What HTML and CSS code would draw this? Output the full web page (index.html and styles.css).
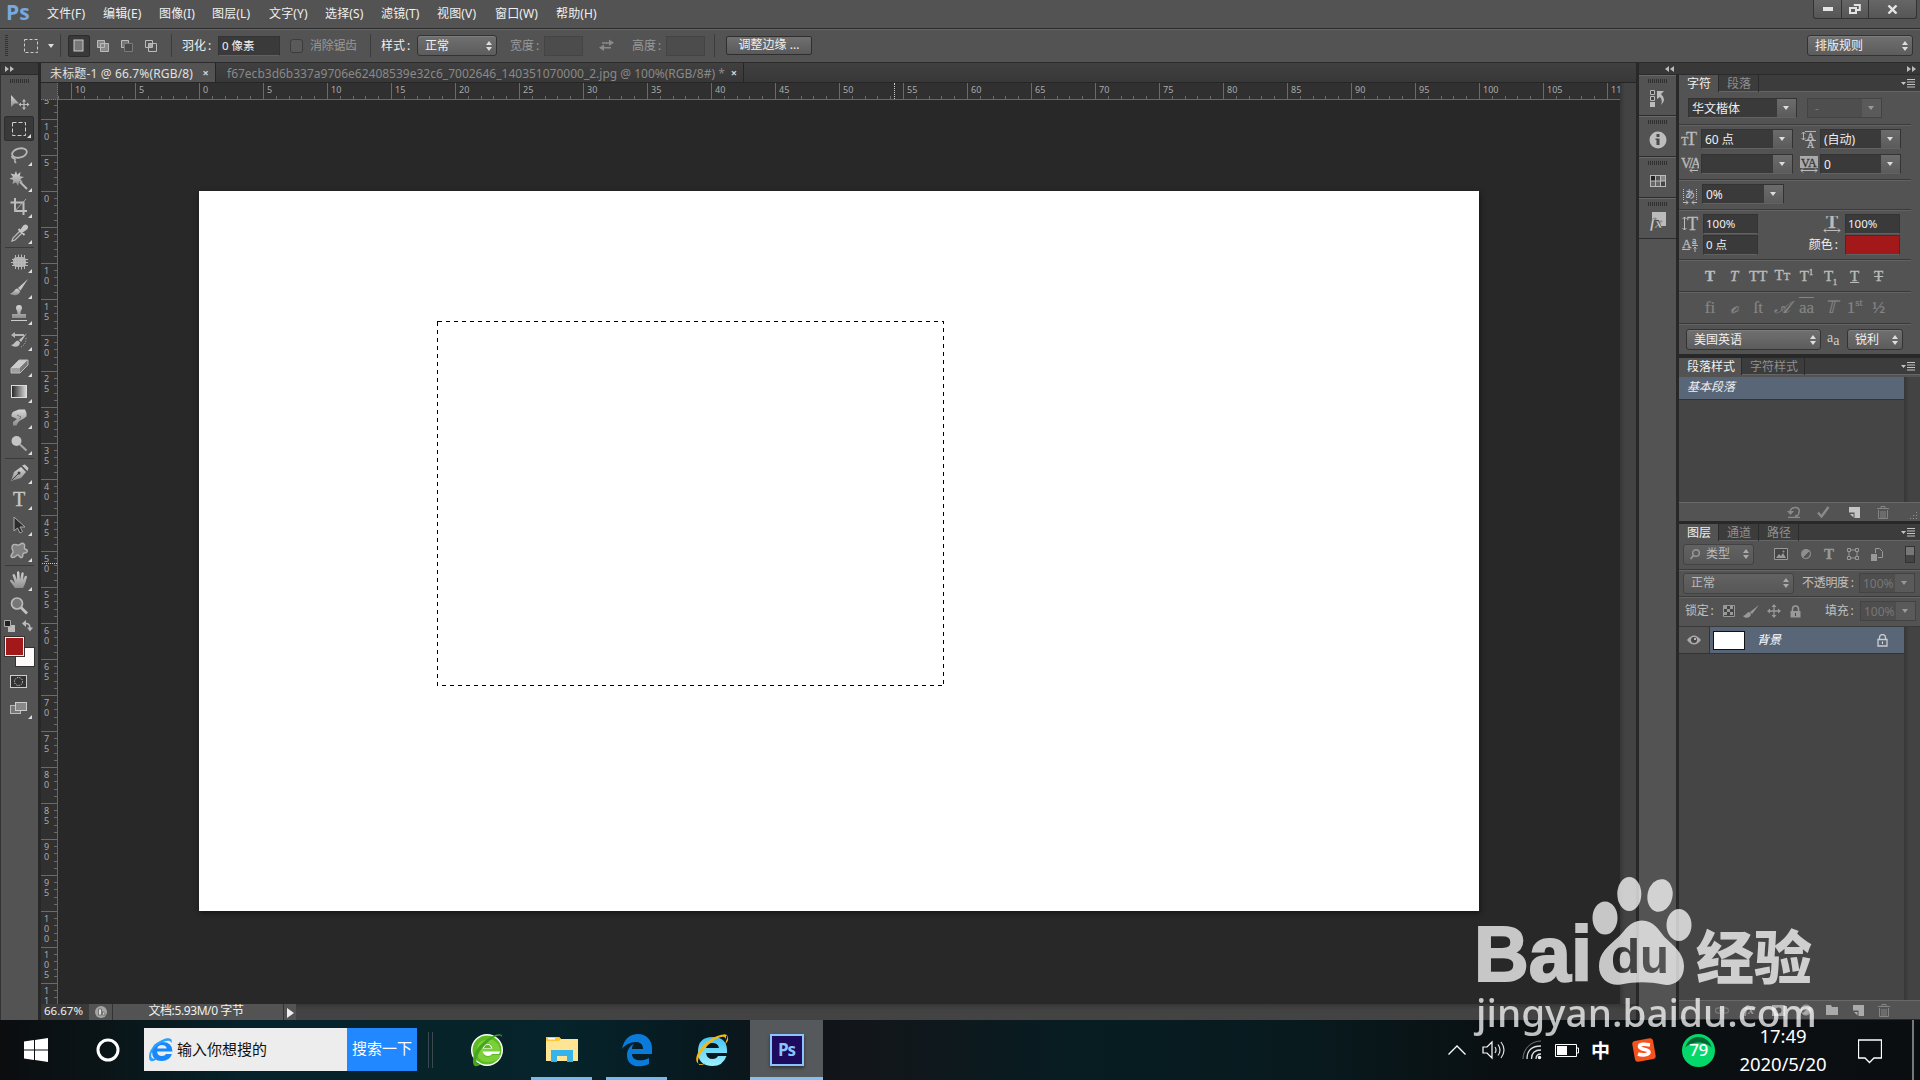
FILE: index.html
```html
<!DOCTYPE html>
<html lang="zh-CN">
<head>
<meta charset="utf-8">
<title>Photoshop</title>
<link rel="stylesheet" href="styles.css">
</head>
<body>
<svg class="defs" aria-hidden="true">
  <defs>
    <linearGradient id="metal" x1="0" y1="0" x2="0" y2="1"><stop offset="0" stop-color="#d6d6d6"/><stop offset="1" stop-color="#8e8e8e"/></linearGradient>
    <linearGradient id="ramp"><stop offset="0" stop-color="#222"/><stop offset="1" stop-color="#ddd"/></linearGradient>
    <linearGradient id="sky" x1="0" y1="0" x2="0" y2="1"><stop offset="0" stop-color="#45c3f5"/><stop offset="1" stop-color="#9df1ff"/></linearGradient>
    <symbol id="updown" viewBox="0 0 6 10"><path d="M3 0l3 4H0zM3 10l3-4H0z" fill="currentColor"/></symbol>
    <symbol id="menu" viewBox="0 0 14 9"><path d="M0 3h5L2.500 6zM6 0h8v1H6zM6 2.500h8v1H6zM6 5h8v1H6zM6 7.500h8v1H6z" fill="#c4c4c4"/></symbol>
    <symbol id="trash" viewBox="0 0 12 13"><path d="M0 2.500h12M4 2V.5h4V2M1.500 4v8.500h9V4M4 5v7M6 5v7M8 5v7" fill="none" stroke="currentColor"/></symbol>
    <symbol id="page" viewBox="0 0 11 11"><path d="M0 0h11v11H5.500V5.500H0z" fill="currentColor"/><path d="M1 7h3.500v3.500z" fill="currentColor"/></symbol>
    <symbol id="lock" viewBox="0 0 11 13"><path d="M2.500 6V4a3 3 0 0 1 6 0v2" fill="none" stroke="currentColor" stroke-width="1.600"/><path d="M.5 6h10v6.500H.5z" fill="currentColor"/><path d="M5 8h1v3H5z" fill="#444"/></symbol>
  </defs>
</svg>

<header class="menubar">
  <span class="logo">Ps</span>
  <nav class="menus">
    <span>文件(F)</span><span>编辑(E)</span><span>图像(I)</span><span>图层(L)</span><span>文字(Y)</span><span>选择(S)</span><span>滤镜(T)</span><span>视图(V)</span><span>窗口(W)</span><span>帮助(H)</span>
  </nav>
  <div class="winbtns">
    <span><svg width="12" height="4"><path d="M1 0h10v4H1z" fill="#e4e4e4"/></svg></span>
    <span><svg width="12" height="10"><path d="M4.800 1h6v5h-3M1 4h6v5H1z" fill="none" stroke="#e4e4e4" stroke-width="2"/></svg></span>
    <span><svg width="12" height="9"><path d="M1.500 .5l8 8M9.500 .5l-8 8" stroke="#e4e4e4" stroke-width="2.400"/></svg></span>
  </div>
</header>

<section class="options">
  <i class="vgrip"></i>
  <svg class="o-marquee" width="14" height="14"><rect x=".5" y=".5" width="13" height="13" fill="none" stroke="#ccc" stroke-dasharray="3 2"/></svg>
  <i class="tri"></i>
  <i class="vsep s1"></i>
  <span class="mode on"><svg width="12" height="13"><rect x="1" y="1" width="9" height="11" fill="#777" stroke="#ccc"/></svg></span>
  <span class="mode"><svg width="14" height="14"><path d="M1.500 1.500h7v7h-7zM4.500 4.500h8v8h-8z" fill="#888" stroke="#bbb"/></svg></span>
  <span class="mode"><svg width="14" height="14"><path d="M4.500 8.500h-3v-7h7v3" fill="#777" stroke="#bbb"/><path d="M4.500 4.500h8v8h-8z" fill="#4a4a4a" stroke="#7a7a7a"/></svg></span>
  <span class="mode"><svg width="14" height="14"><path d="M1.500 1.500h7v7h-7zM4.500 4.500h8v8h-8z" fill="none" stroke="#bbb"/><path d="M5 5h3v3H5z" fill="#aaa"/></svg></span>
  <i class="vsep s2"></i>
  <span class="lbl l1">羽化<b>:</b></span>
  <span class="field f1">0 像素</span>
  <i class="check"></i>
  <span class="lbl dim l2">消除锯齿</span>
  <i class="vsep s3"></i>
  <span class="lbl l3">样式<b>:</b></span>
  <span class="select style">正常<svg width="6" height="10"><use href="#updown"/></svg></span>
  <span class="lbl dim l4">宽度<b>:</b></span>
  <span class="field off"></span>
  <svg class="swap" width="15" height="13"><path d="M3 3.200h7V.5l5 3.300L10 7V4.800H3zM12 9.500H5V12L0 8.800 5 5.500v2.600h7z" fill="#8a8a8a"/></svg>
  <span class="lbl dim l5">高度<b>:</b></span>
  <span class="field off"></span>
  <i class="vsep s4"></i>
  <span class="button">调整边缘 ...</span>
  <span class="select workspace">排版规则<svg width="6" height="10"><use href="#updown"/></svg></span>
</section>

<main class="work">
  <aside class="tools">
    <div class="dockhead"><svg width="9" height="6"><path d="M0 0l4 3-4 3zM5 0l4 3-4 3z" fill="#bbb"/></svg></div>
    <i class="grip"></i>
    <div class="tool nofly"><svg viewBox="0 0 24 24"><path d="M4 4v12l3.500-3.500H12z" fill="url(#metal)"/><path d="M17 9v9M12.500 13.500h9" stroke="#bbb" stroke-width="1.200"/><path d="M17 8l2 2.500h-4zM17 19l2-2.500h-4zM11.500 13.500l2.500-2v4zM22.500 13.500l-2.500-2v4z" fill="#bbb"/></svg></div>
    <div class="tool on"><svg viewBox="0 0 24 24"><rect x="5.500" y="5.500" width="13" height="13" fill="none" stroke="#d0d0d0" stroke-dasharray="4 2"/></svg></div>
    <div class="tool"><svg viewBox="0 0 24 24"><ellipse cx="12.500" cy="10" rx="7.500" ry="4.500" transform="rotate(-14 12.500 10)" fill="none" stroke="#b8b8b8" stroke-width="1.800"/><path d="M5 13c-1 3 4 2 3 4s0 2 1 3" fill="none" stroke="#b8b8b8" stroke-width="1.500"/></svg></div>
    <div class="tool"><svg viewBox="0 0 24 24"><path d="M9 2l1.200 3.800L13.500 3l-.6 4.200 4.100.8-3.700 2 2.700 3.300-4-.9L11 17l-2-3.700L5.500 15l.8-4-4-1.200L6 8 3.500 4.500l4 1z" fill="url(#metal)"/><path d="M13 13l7 7" stroke="#bbb" stroke-width="2"/></svg></div>
    <div class="tool"><svg viewBox="0 0 24 24"><path d="M8 3v13h12M3.500 7.500h13V20" fill="none" stroke="#bdbdbd" stroke-width="2"/><path d="M7 17L19 4" stroke="#aaa"/></svg></div>
    <div class="tool"><svg viewBox="0 0 24 24"><path d="M5 20l1-3 7-7 2 2-7 7z" fill="none" stroke="#bbb" stroke-width="1.300"/><path d="M11.500 8l6 6M13.500 10.500l2.500-4q2-3 3.600-1.500t-1.500 3.700l-4 2.400" stroke="#c5c5c5" stroke-width="2" fill="#c5c5c5"/></svg></div>
    <hr>
    <div class="tool"><svg viewBox="0 0 24 24"><rect x="6" y="7" width="13" height="10" rx="4" fill="#b0b0b0"/><path d="M8.500 5v14M11.500 4.500v15M14.500 4.500v15M17.500 5v14M5 9.500h16M4 12.500h17M5 15.500h16" stroke="#b8b8b8"/></svg></div>
    <div class="tool"><svg viewBox="0 0 24 24"><path d="M21 3L11 12l2.500 2.500z" fill="#c8c8c8"/><path d="M10.500 12.500c-3 0-3 4-7.500 5 3 3 10 2 10-2.500z" fill="url(#metal)"/></svg></div>
    <div class="tool"><svg viewBox="0 0 24 24"><path d="M12 3a3 3 0 0 1 3 3c0 2-1.500 2-1.500 6H19v4H5v-4h5.500c0-4-1.500-4-1.500-6a3 3 0 0 1 3-3z" fill="url(#metal)"/><path d="M4 18.500h16" stroke="#ccc"/></svg></div>
    <div class="tool"><svg viewBox="0 0 24 24"><path d="M20 5l-8 7 2 2zM11 12.500c-3 0-3 4-7 4.500 3 3 9 2 9-2.500z" fill="#c0c0c0"/><path d="M4 7l4-3v2h9v2H8v2z" fill="#b5b5b5"/><path d="M19 10c0 4-1 7-5 9" fill="none" stroke="#b5b5b5" stroke-dasharray="1 1.500"/></svg></div>
    <div class="tool"><svg viewBox="0 0 24 24"><path d="M4 14l8-8h9l-8 8z" fill="#ccc"/><path d="M4 14h9v5H4z" fill="#a0a0a0"/><path d="M13 14l8-8v5l-8 8z" fill="#787878"/><path d="M4 14l8-8h9v5l-8 8H4z" fill="none" stroke="#bbb"/></svg></div>
    <div class="tool"><svg viewBox="0 0 24 24"><rect x="4.500" y="5.500" width="15" height="12" fill="url(#ramp)" stroke="#ddd"/></svg></div>
    <div class="tool"><svg viewBox="0 0 24 24"><path d="M6 19.500v-3.500l4-3-5.500-2.500Q4 6 8 5l4-1.500h6q2 3 1.500 7L16 13l-3 1.500-2 2-1.500 3z" fill="url(#metal)"/><path d="M10 9l4 2-2 2.500" stroke="#777" fill="none"/></svg></div>
    <div class="tool"><svg viewBox="0 0 24 24"><circle cx="9.500" cy="9" r="5" fill="#c4c4c4"/><path d="M13 12.500l6.500 6" stroke="#aaa" stroke-width="2"/></svg></div>
    <hr>
    <div class="tool"><svg viewBox="0 0 24 24"><path d="M4 20l3-9 7-5 5 5-5 6z" fill="url(#metal)"/><path d="M15 4.500l5.500 5.500 1-3-3.500-3.500z" fill="#c5c5c5"/><path d="M5 19l6-6" stroke="#444"/><circle cx="12" cy="12" r="1.500" fill="#444"/></svg></div>
    <div class="tool"><svg viewBox="0 0 24 24"><text x="12" y="18.500" class="tglyph">T</text></svg></div>
    <div class="tool"><svg viewBox="0 0 24 24"><path d="M7 4v14l3.500-3 2.500 5 2.500-1.500L13 14h5z" fill="#2b2b2b" stroke="#aaa"/></svg></div>
    <div class="tool"><svg viewBox="0 0 24 24"><path d="M6 6c2-2 4 1 6 0s3-3 5-1-1 4 1 5 3 1 2 3-4 0-4 2-1 5-3 3-2-3-4-1-5 2-5 0 3-3 2-5-2-4 0-6z" fill="#808080" stroke="#b5b5b5" stroke-width="1.400"/></svg></div>
    <hr>
    <div class="tool"><svg viewBox="0 0 24 24"><path d="M8 20l-5-7q0-2 2-1l3 3L5.500 7q1-2 2.500 0l2 5V4q1.200-1.500 2.300 0L13 12l1.500-7q1.500-1.500 2.200.3L16 12l2-4q2-1 2 1l-2 7-2 4z" fill="url(#metal)"/></svg></div>
    <div class="tool nofly"><svg viewBox="0 0 24 24"><circle cx="10" cy="9.500" r="5.500" fill="#777" stroke="#bbb" stroke-width="1.700"/><path d="M14 13.500l6 6" stroke="#c2c2c2" stroke-width="2.800"/></svg></div>
    <div class="colortop"><svg width="30" height="14"><path d="M4 5h7v7H4z" fill="#bbb"/><path d="M.5.5h6v6h-6z" fill="#222" stroke="#aaa"/><path d="M20 3.500h2q4 0 4 5" fill="none" stroke="#bbb" stroke-width="1.500"/><path d="M18 3.500L22 0v7zM23 7.500h6l-3 4z" fill="#bbb"/></svg></div>
    <div class="swatches"><i class="bg"></i><i class="fg"></i></div>
    <div class="tool nofly mask"><svg viewBox="0 0 24 24"><rect x="3.500" y="5.500" width="16" height="12" fill="#333" stroke="#ccc"/><circle cx="11.500" cy="11.500" r="4" fill="none" stroke="#ddd" stroke-dasharray="1.200 1.200"/></svg></div>
    <div class="tool"><svg viewBox="0 0 24 24"><rect x="3.500" y="9.500" width="10" height="8" fill="#777" stroke="#bbb"/><rect x="8.500" y="6.500" width="11" height="8" fill="#888" stroke="#ccc"/></svg></div>
  </aside>

  <section class="doc">
    <div class="tabs">
      <div class="tab active"><span>未标题-1 @ 66.7%(RGB/8)</span><b>×</b></div>
      <div class="tab other"><span>f67ecb3d6b337a9706e62408539e32c6_7002646_140351070000_2.jpg @ 100%(RGB/8#) *</span><b>×</b></div>
    </div>
    <div class="body">
      <div class="corner"></div>
      <div class="hruler">
        <span>10</span><span>5</span><span>0</span><span>5</span><span>10</span><span>15</span><span>20</span><span>25</span><span>30</span><span>35</span><span>40</span><span>45</span><span>50</span><span>55</span><span>60</span><span>65</span><span>70</span><span>75</span><span>80</span><span>85</span><span>90</span><span>95</span><span>100</span><span>105</span><span>110</span>
        <i class="hmark"></i>
      </div>
      <div class="vscroll"></div>
      <div class="vruler">
        <div class="vticks">
        <span>1<br>5</span><span>1<br>0</span><span>5</span><span>0</span><span>5</span><span>1<br>0</span><span>1<br>5</span><span>2<br>0</span><span>2<br>5</span><span>3<br>0</span><span>3<br>5</span><span>4<br>0</span><span>4<br>5</span><span>5<br>0</span><span>5<br>5</span><span>6<br>0</span><span>6<br>5</span><span>7<br>0</span><span>7<br>5</span><span>8<br>0</span><span>8<br>5</span><span>9<br>0</span><span>9<br>5</span><span>1<br>0<br>0</span><span>1<br>0<br>5</span><span>1<br>1<br>0</span>
        </div>
        <i class="vmark"></i>
      </div>
      <div class="canvas">
        <div class="paper"><svg class="selection" width="508" height="366"><rect x=".5" y=".5" width="506" height="364" fill="none" stroke="#000" stroke-dasharray="4 4" shape-rendering="crispEdges"/></svg></div>
      </div>
    </div>
    <div class="status">
      <span class="zoom">66.67%</span>
      <span class="share"><svg width="12" height="12"><circle cx="6" cy="6" r="6" fill="#a5a5a5"/><path d="M3.500 3h3v6h-3zM7.500 5.500l2.500 2v1.500H7.500z" fill="#ddd" stroke="#555" stroke-width=".7"/></svg></span>
      <span class="size">文档:5.93M/0 字节</span>
      <span class="go"><svg width="7" height="10"><path d="M0 0l7 5-7 5z" fill="#eee"/></svg></span>
    </div>
  </section>

  <section class="dock">
    <div class="dockhead"><svg width="9" height="6"><path d="M4 0L0 3l4 3zM9 0L5 3l4 3z" fill="#bbb"/></svg><svg width="9" height="6"><path d="M0 0l4 3-4 3zM5 0l4 3-4 3z" fill="#bbb"/></svg></div>
    <div class="dockbody">
      <div class="strip">
        <div class="cell"><i class="grip"></i><svg width="16" height="18"><path d="M.5.500h4v4h-4zM.5 6.500h4v4h-4z" fill="#444" stroke="#bbb"/><path d="M0 12h5v5H0z" fill="#bbb"/><path d="M7 1l7 0-3 3q6 6 0 11 2-5-1-8l-3 2z" fill="#bbb"/></svg></div>
        <div class="cell"><i class="grip"></i><svg width="18" height="18"><circle cx="9" cy="9" r="8.500" fill="#bdbdbd"/><path d="M7.500 3h3v3h-3zM6.500 7.500h4V14h-3V9h-1z" fill="#4a4a4a"/></svg></div>
        <div class="cell"><i class="grip"></i><svg width="16" height="12"><path d="M0 0h16v12H0z" fill="#bbb"/><path d="M1 1h4v4.500H1z" fill="#222"/><path d="M6 1h4v4.500H6z" fill="#555"/><path d="M11 1h4v4.500h-4z" fill="#888"/><path d="M1 6.500h4V11H1zM6 6.500h4V11H6z" fill="#666"/><path d="M11 6.500h4V11h-4z" fill="#444"/></svg></div>
        <div class="cell"><i class="grip"></i><svg width="18" height="20"><path d="M3 0h14v14h-5l-2-6H3z" fill="#bbb"/><text x="1" y="16" class="fx">fx</text></svg></div>
      </div>
      <div class="panels">
        <article class="panel character">
          <div class="ptabs"><span class="act w39">字符</span><span class="w39">段落</span><svg width="14" height="9"><use href="#menu"/></svg></div>
          <div class="row fontrow"><span class="combo c109">华文楷体<i></i></span><span class="combo c75 off">-<i></i></span></div>
          <div class="grp two">
            <svg width="18" height="16"><text x="0" y="14" class="g s12">T</text><text x="5" y="14" class="g s17">T</text></svg><span class="combo">60 点<i></i></span>
            <svg width="18" height="17"><path d="M3.500 1v8M1.500 3l2-2 2 2M1.500 7l2 2 2-2M5 .5h11M5 9.500h11" stroke="#b4b4b4" fill="none"/><text x="7" y="8.500" class="g s10">A</text><text x="7" y="17" class="g s10">A</text></svg><span class="combo">(自动)<i></i></span>
            <svg width="18" height="17"><text x="0" y="12" class="g s14 tight">V/A</text><path d="M9 14.500h8M11 12.500l-2 2 2 2" stroke="#bbb" fill="none"/></svg><span class="combo"><i></i></span>
            <svg width="18" height="17"><path d="M0 0h18v12H0z" fill="#aaa"/><text x="1" y="10.500" class="g s12 dark">VA</text><path d="M1 14.500h16M3 12.500l-2 2 2 2M15 12.500l2 2-2 2" stroke="#bbb" fill="none"/></svg><span class="combo">0<i></i></span>
          </div>
          <div class="grp one"><svg width="16" height="16"><path d="M1.500 0v11M14.500 0v11" stroke="#bbb" stroke-dasharray="1 1"/><text x="3" y="9" class="cj">あ</text><path d="M1 13.500h5M4 11.500l2 2-2 2M15 13.500h-5M12 11.500l-2 2 2 2" stroke="#bbb" fill="none"/></svg><span class="combo">0%<i></i></span></div>
          <div class="grp scale">
            <svg width="18" height="16"><path d="M2.500 1v13M.5 3l2-2 2 2M.5 12l2 2 2-2" stroke="#bbb" fill="none"/><text x="5" y="14" class="g s17">T</text></svg><span class="field">100%</span>
            <svg width="18" height="17"><text x="3" y="12" class="g s17 bold">T</text><path d="M1 14.500h16M3 12.500l-2 2 2 2M15 12.500l2 2-2 2" stroke="#bbb" fill="none"/></svg><span class="field">100%</span>
            <svg width="18" height="16"><text x="0" y="11" class="g s13">A</text><text x="10" y="7" class="g s10">a</text><path d="M0 12.500h8M10 8.500h6M13 15v-5M11.500 11.500l1.500-1.500 1.500 1.500" stroke="#bbb" fill="none"/></svg><span class="field">0 点</span>
            <span class="color">颜色<b>:</b></span><span class="field red"></span>
          </div>
          <div class="grp glyphs"><b>T</b><i>T</i><span>TT</span><span>T<small>T</small></span><span>T<sup>1</sup></span><span>T<sub>1</sub></span><u>T</u><s>T</s></div>
          <div class="grp glyphs dimmed"><span>fi</span><i>ℴ</i><span>ſt</span><i>𝒜</i><span class="over">aa</span><i>𝕋</i><span>1<sup>st</sup></span><span>½</span></div>
          <div class="row lang"><span class="select">美国英语<svg width="6" height="10"><use href="#updown"/></svg></span><span class="aa">a<small>a</small></span><span class="select">锐利<svg width="6" height="10"><use href="#updown"/></svg></span></div>
        </article>
        <article class="panel pstyles">
          <div class="ptabs"><span class="act w62">段落样式</span><span class="w62">字符样式</span><svg width="14" height="9"><use href="#menu"/></svg></div>
          <div class="list"><div class="inner"><div class="item">基本段落</div></div></div>
          <div class="foot f-styles">
            <svg width="14" height="12"><path d="M3 5q2-4 6-3.500t3 5-4 3M1 11.500h12" fill="none" stroke="#8a8a8a" stroke-width="1.500"/><path d="M0 5h7L3.500 9z" fill="#8a8a8a"/></svg>
            <svg width="13" height="12"><path d="M1 6.500l3.500 4L11.500 1" fill="none" stroke="#8a8a8a" stroke-width="2.400"/></svg>
            <svg class="lite" width="11" height="11"><use href="#page"/></svg>
            <svg class="dk" width="12" height="13"><use href="#trash"/></svg>
            <i class="resize"></i>
          </div>
        </article>
        <article class="panel layers">
          <div class="ptabs"><span class="act w39">图层</span><span class="w39">通道</span><span class="w39">路径</span><svg width="14" height="9"><use href="#menu"/></svg></div>
          <div class="lrow filter">
            <span class="select soft"><svg class="mag" width="10" height="11"><circle cx="6" cy="4" r="3.300" fill="none" stroke="#999" stroke-width="1.400"/><path d="M3.500 6.500L.5 10" stroke="#999" stroke-width="1.600"/></svg>类型<svg width="6" height="10"><use href="#updown"/></svg></span>
            <svg width="14" height="12"><path d="M.5.500h13v11H.5z" fill="#444" stroke="#999"/><path d="M2 10l3-4 2 2 2-3 3 5z" fill="#999"/><circle cx="9.500" cy="3.500" r="1" fill="#999"/></svg>
            <svg width="12" height="12"><circle cx="6" cy="6" r="5" fill="#8f8f8f"/><path d="M2.500 9.500a5 5 0 0 0 7-7z" fill="#555" stroke="#8f8f8f"/></svg>
            <svg width="12" height="12"><text x="1" y="11" class="g s15 grey bold">T</text></svg>
            <svg width="12" height="12"><path d="M2 2h8v8H2z" fill="none" stroke="#999"/><path d="M.5.5h3v3h-3zM8.500.5h3v3h-3zM.5 8.500h3v3h-3zM8.500 8.500h3v3h-3z" fill="#555" stroke="#999"/></svg>
            <svg width="12" height="13"><path d="M4.500 5V.5h4l3 3v6H7" fill="none" stroke="#999"/><path d="M0 6h6v7H0z" fill="#999"/></svg>
            <i class="switch"></i>
          </div>
          <div class="lrow blend">
            <span class="select soft">正常<svg width="6" height="10"><use href="#updown"/></svg></span><span class="t">不透明度<b>:</b></span><span class="combo off">100%<i></i></span>
          </div>
          <div class="lrow locks">
            <span class="t lk">锁定<b>:</b></span>
            <svg width="12" height="12"><path d="M.5.5h11v11H.5z" fill="#444" stroke="#999"/><path d="M1 1h3v3H1zM7 1h3v3H7zM4 4h3v3H4zM1 7h3v3H1zM7 7h3v3H7z" fill="#999"/></svg>
            <svg width="16" height="13"><path d="M16 0L7 7l2 2zM6.500 7c-3 0-3 3-6.500 4 2 3 8 2 8-2z" fill="#999"/></svg>
            <svg width="14" height="14"><path d="M7 2v10M2 7h10" stroke="#999" stroke-width="1.300"/><path d="M7 0l2.500 3h-5zM7 14l2.500-3h-5zM0 7l3-2.500v5zM14 7l-3-2.500v5z" fill="#999"/></svg>
            <svg class="lockg" width="11" height="13"><use href="#lock"/></svg>
            <span class="t fill">填充<b>:</b></span><span class="combo off">100%<i></i></span>
          </div>
          <div class="list layerlist"><div class="inner"><div class="layer">
            <span class="eye"><svg width="14" height="10"><path d="M0 5q7-9 14 0-7 9-14 0z" fill="#aaa"/><circle cx="7" cy="5" r="3" fill="#444"/><circle cx="8" cy="4" r="1" fill="#ddd"/></svg></span>
            <i class="thumb"></i><em>背景</em><svg class="lockw" width="11" height="13"><path d="M2.500 5V3.500a3 3 0 0 1 6 0V5M1 5.500h9v6.500H1z" fill="none" stroke="#ccc" stroke-width="1.300"/><path d="M5 7.500h1V10H5z" fill="#ddd"/></svg>
          </div></div></div>
          <div class="foot f-layers">
            <svg width="14" height="9"><path d="M6 2H3a2.500 2.500 0 0 0 0 5h3M8 2h3a2.500 2.500 0 0 1 0 5H8M4 4.500h6" fill="none" stroke="#777" stroke-width="1.300"/></svg>
            <svg width="14" height="12"><text x="0" y="10" class="fx small">fx</text></svg>
            <svg width="13" height="11"><path d="M0 0h13v11H0z" fill="#aaa"/><circle cx="6.500" cy="5.500" r="3" fill="#555"/></svg>
            <svg width="12" height="12"><circle cx="6" cy="6" r="5" fill="#666" stroke="#aaa"/><path d="M2.500 9.500l7-7A5 5 0 0 1 2.500 9.500z" fill="#aaa"/></svg>
            <svg width="12" height="10"><path d="M0 0h5l1 2h6v8H0z" fill="#aaa"/></svg>
            <svg class="mid" width="11" height="11"><use href="#page"/></svg>
            <svg class="dk" width="12" height="13"><use href="#trash"/></svg>
          </div>
        </article>
      </div>
    </div>
  </section>
</main>

<footer class="taskbar">
  <svg class="win" width="24" height="24"><path d="M0 3.500L10 2v9.500H0zM11 1.900L24 0v11.500H11zM0 12.500h10V22L0 20.500zM11 12.500h13V24l-13-1.900z" fill="#fff"/></svg>
  <svg class="cortana" width="24" height="24"><circle cx="12" cy="12" r="10" fill="none" stroke="#fff" stroke-width="3"/></svg>
  <div class="search"><svg width="26" height="26" viewBox="0 0 26 26"><path d="M24.500 14.500H9q.5 4.500 5 4.500 3 0 4-2h6q-2.500 7-10 7Q4 24 4 14.500T14 5q10.500 0 10.500 9.500zM9.200 11.500h9.500q-.5-3.500-4.700-3.500t-4.800 3.500z" fill="#1688fa" fill-rule="evenodd"/><path d="M23.500 6C27-5 1 5 1 20c0 7 6 4 9 1-8 3-8-3-5-8S21 0 23.500 6z" fill="#2aa0ff"/></svg><span>输入你想搜的</span><b>搜索一下</b></div>
  <i class="tsep"></i>
  <div class="app"><svg width="34" height="36" viewBox="0 0 34 36"><circle cx="17" cy="18" r="16" fill="#fff"/><circle cx="17" cy="18" r="14.500" fill="#5dbb22"/><path d="M30 20.500H13q.5 4.500 5 4.500 3 0 4-2h8v2q-4 5-12 5-11 0-11-11.500T18 8l5 0 5 4q2 3 2 8.500zM13 16h9.500q-.5-4.500-5-4.500T13 16z" fill="#7bd03a" fill-rule="evenodd"/><path d="M30 19.500H12.500v-3h10q-1-4.500-5-4.500t-5 5q0 7 5.500 7 3 0 4-2h7" fill="#fff"/><path d="M14 16q.5-3 3.500-3.200 3 .2 3.500 3.200z" fill="#5dbb22"/><path d="M32 5C33-4 3 11 3 29c0 8 6 5 8 3-7 1-5-7-1-13S28-1 32 5z" fill="#45a51d"/></svg></div>
  <div class="app run"><svg width="32" height="28" viewBox="0 0 32 28"><path d="M0 1h13l2 2h17v22H0z" fill="#ffe493"/><path d="M0 1h13l2 2-2 2H0z" fill="#ffc534"/><path d="M5 26V14h22v12h-6v-6H11v6z" fill="#36b4ea"/><path d="M2 2h7v1.500H2z" fill="#fff"/></svg></div>
  <div class="app run"><svg width="30" height="33" viewBox="0 0 30 33"><path d="M0 15C2 5 8 0 16 0c9 0 14 7 14 14v6H10c0 7 10 8 17 4v6c-11 5-22 2-22-9 0-6 4-10 7-11-2 2-2 4-2 5h11c0-5-3-7-7-7C8 8 3 11 0 15z" fill="#0a7adb"/></svg></div>
  <div class="app"><svg width="34" height="34" viewBox="0 0 34 34"><path d="M32 20H11q1 6 6.500 6 4 0 5.500-3h8.500Q28 33 17.500 33 3 33 3 18.500T17.500 4Q33 4 32 20zM11 15h13q-1-5-6.500-5T11 15z" fill="url(#sky)" fill-rule="evenodd"/><path d="M31 8Q36-1 22 4 31-1 32.500 3T32 9L30 12Q32 6 30 4.500C25 0 3 17 3 29c0 5 6 3 9 0-12 7-14-4-6-14S27 0 31 2z" fill="#f6b90f"/></svg></div>
  <div class="app current"><span class="psicon">Ps</span></div>
  <div class="tray">
    <svg class="t1" width="18" height="10"><path d="M.5 9.500L9 1l8.500 8.500" fill="none" stroke="#fff" stroke-width="1.300"/></svg>
    <svg class="t2" width="24" height="20"><path d="M1 7h4l5-5v16l-5-5H1z" fill="none" stroke="#fff" stroke-width="1.200"/><path d="M13 7q2 3 0 6M16 4.500q4 5.500 0 11M19 2q6 8 0 16" fill="none" stroke="#ddd" stroke-width="1.200"/></svg>
    <svg class="t3" width="20" height="20"><path d="M1 19C1 9 9 1 19 1" stroke="#777" fill="none"/><path d="M5 19q0-13 14-13M9.500 19q0-9 9.500-9M14 19q0-5 5-5" fill="none" stroke="#ddd" stroke-width="1.300"/><circle cx="17.500" cy="17.500" r="1.700" fill="#fff"/></svg>
    <svg class="t4" width="24" height="13"><path d="M.5.5h21v12H.5zM22 4h1.500v5H22" fill="none" stroke="#fff"/><path d="M2 2h10v9H2z" fill="#fff"/></svg>
    <span class="ime">中</span>
    <svg class="t5" width="26" height="26"><rect x="2.500" y="2.500" width="21" height="21" rx="3" transform="rotate(-10 13 13)" fill="#f5531d"/><path d="M19 8q-10.500-2-10.500 1.500c0 3.500 9.500 2.500 9.500 5.500s-7 3.500-11 2" fill="none" stroke="#fff" stroke-width="3.600"/></svg>
    <span class="ball">79</span>
    <div class="clock"><span>17:49</span><span>2020/5/20</span></div>
    <svg class="note" width="24" height="25"><path d="M.5 1h23v18h-7.500l-4.500 4.500L7 19H.5z" fill="none" stroke="#fff" stroke-width="1.300"/></svg>
    <i class="peek"></i>
  </div>
</footer>

<svg class="watermark" width="360" height="180" viewBox="0 0 360 180">
  <defs>
    <mask id="pawcut"><rect width="360" height="180" fill="#fff"/><text x="139" y="103" class="wm-du" textLength="58" lengthAdjust="spacingAndGlyphs">du</text></mask>
  </defs>
  <g fill="#fff">
    <text x="2" y="111" class="wm-bai" textLength="118" lengthAdjust="spacingAndGlyphs">Bai</text>
    <ellipse cx="133" cy="48" rx="12.500" ry="16.500"/><ellipse cx="157.300" cy="24" rx="12" ry="17"/><ellipse cx="188" cy="25.500" rx="12.500" ry="16.500" transform="rotate(12 188 25.500)"/><ellipse cx="207" cy="55" rx="12.500" ry="16"/>
    <path mask="url(#pawcut)" d="M170 50.500c12 0 17 10 22 16 9 9 20 16 20 30 0 15-12 20-21 18-14-3-28-3-42 0-11 2-22-5-22-18 0-14 9-20 20-30 6-6 11-16 23-16z"/>
    <text x="224" y="109" class="wm-jy" textLength="116" lengthAdjust="spacingAndGlyphs">经验</text>
    <text x="4" y="157" class="wm-url" textLength="341" lengthAdjust="spacingAndGlyphs">jingyan.baidu.com</text>
  </g>
</svg>
</body>
</html>
```
FILE: styles.css
```css
* { box-sizing: border-box; }
body {
  margin: 0;
  width: 1920px;
  height: 1080px;
  overflow: hidden;
  display: flex;
  flex-direction: column;
  position: relative;
  background: #535353;
  color: #f0f0f0;
  font: 12px/14px "Noto Sans", "Noto Sans CJK SC", sans-serif;
  white-space: nowrap;
}
svg { display: block; flex: none; }
i, em { flex: none; }
.defs { position: absolute; width: 0; height: 0; }

/* menu bar */
.menubar { height: 28px; display: flex; flex: none; background: #535353; }
.logo { width: 47px; padding: 1px 0 0 6px; font: bold 21px/23px "Open Sans", sans-serif; color: #78a9dc; }
.menus { display: grid; grid-template-columns: 56px 56px 53px 57px 56px 56px 56px 58px 61px 60px; padding-top: 6px; line-height: 15px; letter-spacing: .15px; }
.winbtns { margin-left: auto; margin-right: 3px; height: 19px; display: grid; grid-template-columns: 28px 27px 47px; border: 1px solid #333; border-top: 0; border-radius: 0 0 3px 3px; background: linear-gradient(#666, #565656); }
.winbtns span { display: flex; align-items: center; justify-content: center; border-right: 1px solid #333; }
.winbtns span:last-child { border: 0; }

/* options bar */
.options { height: 35px; flex: none; display: flex; align-items: center; border-top: 1px solid #2b2b2b; border-bottom: 1px solid #2b2b2b; box-shadow: inset 0 1px #656565; padding-left: 5px; }
.vgrip { width: 3px; height: 22px; background: repeating-linear-gradient(#333 0 1px, transparent 1px 2px); }
.o-marquee { margin-left: 16px; }
.tri { margin-left: 10px; border: 3px solid transparent; border-top: 4px solid #ddd; border-bottom: 0; }
.vsep { width: 1px; height: 23px; background: #3c3c3c; }
.s1 { margin: 0 7px 0 6px; }
.mode { width: 22px; height: 22px; margin-right: 2px; display: flex; align-items: center; justify-content: center; }
.mode.on { background: #393939; border: 1px solid #2c2c2c; border-radius: 2px; }
.s2 { margin-left: 7px; }
.lbl b, .t b, .color b { font-weight: 400; padding-left: 2px; }
.dim { color: #999; }
.l1 { margin-left: 10px; width: 36px; }
.field { height: 20px; background: #3a3a3a; border: 1px solid #333; border-bottom-color: #606060; padding: 2px 3px; }
.f1 { width: 62px; font-size: 11.500px; }
.check { width: 13px; height: 14px; margin-left: 10px; border: 1px solid #3c3c3c; border-radius: 3px; background: #5a5a5a; }
.l2 { margin-left: 7px; width: 53px; letter-spacing: -.3px; }
.s3 { margin-left: 7px; }
.l3 { margin-left: 10px; width: 36px; }
.select { height: 21px; display: flex; align-items: center; justify-content: space-between; padding: 0 4px 0 7px; background: linear-gradient(#707070, #5c5c5c); border: 1px solid #333; border-radius: 3px; box-shadow: inset 0 1px #7c7c7c; }
.select svg { color: #ddd; }
.style { width: 80px; }
.l4 { margin-left: 13px; width: 34px; }
.field.off { width: 39px; background: #4c4c4c; border-color: #444; }
.swap { margin-left: 16px; }
.l5 { margin-left: 18px; width: 34px; }
.s4 { margin-left: 9px; }
.button { margin-left: 11px; width: 86px; height: 19px; border: 1px solid #2f2f2f; border-radius: 2px; background: linear-gradient(#707070, #595959); text-align: center; line-height: 16px; }
.workspace { margin-left: auto; margin-right: 7px; width: 106px; }

/* work area */
.work { flex: none; height: 957px; display: flex; background: #282828; }
.dockhead { height: 12px; flex: none; display: flex; align-items: center; justify-content: space-between; background: #383838; border-bottom: 1px solid #2b2b2b; }
.grip { display: block; width: 20px; height: 4px; background: repeating-linear-gradient(90deg, #303030 0 1px, transparent 1px 2px); }

/* tool column */
.tools { width: 38px; flex: none; display: flex; flex-direction: column; background: #535353; border-left: 1px solid #333; margin-right: 3px; }
.tools .dockhead { padding-left: 4px; }
.tools .grip { margin: 4px 0 7px 9px; }
.tool { height: 26px; flex: none; width: 30px; margin-left: 3px; padding: 1px 3px; position: relative; }
.tool svg { width: 24px; height: 24px; }
.tool::after { content: ""; position: absolute; right: 2px; bottom: 2px; border: 2px solid transparent; border-right-color: #ddd; border-bottom-color: #ddd; }
.tool.nofly::after { display: none; }
.tool.on { background: #393939; border: 1px solid #2d2d2d; border-radius: 2px; padding: 0 2px; height: 25px; margin-bottom: 1px; }
.tools hr { width: 29px; margin: 1px 0 1px 4px; border: 0; border-top: 1px solid #3a3a3a; }
.colortop { padding: 1px 0 0 3px; height: 19px; }
.swatches { height: 29px; padding: 9px 0 0 14px; position: relative; }
.swatches i { display: block; width: 20px; height: 20px; border: 1px solid #333; background: #fffafa; }
.swatches .fg { position: absolute; left: 4px; top: -1px; width: 19px; height: 19px; background: #a31919; border: 1px solid #eee; outline: 1px solid #333; }
.mask { margin-top: 2px; }
.tglyph { font: 20px "Liberation Serif", serif; fill: #c8c8c8; text-anchor: middle; stroke: #c8c8c8; stroke-width: .4; }

/* document window */
.doc { width: 1595px; flex: none; display: flex; flex-direction: column; }
.tabs { height: 20px; flex: none; display: flex; background: linear-gradient(#404040, #383838); border-bottom: 1px solid #262626; }
.tab { display: flex; align-items: center; justify-content: space-between; padding: 2px 6px 0 9px; border-right: 1px solid #262626; color: #898989; }
.tab b { font: bold 11px/12px "Noto Sans", sans-serif; color: #d0d0d0; padding-bottom: 1px; }
.tab.active { width: 175px; background: #535353; color: #e0e0e0; letter-spacing: .15px; }
.tab.other { width: 528px; padding-left: 11px; }
.body { height: 921px; flex: none; display: grid; grid-template-columns: 17px 1562px 16px; grid-template-rows: 17px 904px; }
.corner { background: #4a4a4a; border-right: 1px dotted #777; border-bottom: 1px dotted #777; }
.hruler {
  position: relative; display: flex; overflow: hidden; padding-left: 13px; border-bottom: 1px solid #686868;
  background:
    linear-gradient(90deg, #6a6a6a 0 1px, transparent 1px) 13px 0 / 64px 17px repeat-x,
    linear-gradient(90deg, transparent 13px, #6a6a6a 13px 14px, transparent 14px 26px, #6a6a6a 26px 27px, transparent 27px 38px, #6a6a6a 38px 39px, transparent 39px 51px, #6a6a6a 51px 52px, transparent 52px) 13px 13px / 64px 4px repeat-x,
    #303030;
}
.hruler span { flex: none; width: 64px; padding: 1px 0 0 4px; font-size: 9px; line-height: 12px; color: #aaa; }
.hmark { position: absolute; left: 836px; top: 0; height: 16px; border-left: 1px dotted #ccc; }
.vscroll { grid-row: 1 / 3; grid-column: 3; background: linear-gradient(90deg, #363636, #434343 5px, #434343); }
.vruler { position: relative; overflow: hidden; border-right: 1px solid #686868; background: #303030; }
.vticks {
  margin-top: -17px; padding-left: 3px;
  background:
    linear-gradient(#6a6a6a 0 1px, transparent 1px) 0 0 / 17px 36px repeat-y,
    linear-gradient(transparent 7px, #6a6a6a 7px 8px, transparent 8px 14px, #6a6a6a 14px 15px, transparent 15px 22px, #6a6a6a 22px 23px, transparent 23px 29px, #6a6a6a 29px 30px, transparent 30px) 13px 0 / 4px 36px repeat-y;
}
.vticks span { display: block; height: 36px; padding-top: 3px; font-size: 9px; line-height: 10px; color: #aaa; }
.vmark { position: absolute; top: 463px; left: 1px; width: 15px; border-top: 1px dotted #ccc; }
.canvas { background: #282828; padding: 91px 0 0 141px; }
.paper { width: 1280px; height: 720px; background: #fff; padding: 130px 0 0 238px; box-shadow: 1px 2px 5px #151515; }
.status { height: 16px; flex: none; display: flex; background: linear-gradient(#363636, #434343 6px); line-height: 14px; }
.zoom { width: 48px; padding-left: 3px; background: #3a3a3a; font-size: 11.500px; }
.share { width: 24px; background: #535353; display: flex; align-items: center; justify-content: center; border-right: 1px solid #333; }
.size { width: 170px; background: #535353; text-align: center; font-size: 12px; letter-spacing: -.4px; padding-right: 4px; }
.go { width: 13px; background: #535353; border-left: 1px solid #333; padding: 4px 0 0 3px; }

/* right dock */
.dock { width: 281px; flex: none; margin-left: 3px; display: flex; flex-direction: column; }
.dock > .dockhead { padding: 0 4px 0 26px; }
.dockbody { display: flex; height: 945px; }
.strip { width: 37px; margin-right: 3px; background: #535353; }
.cell { height: 41px; border-bottom: 1px solid #2d2d2d; box-shadow: inset 0 1px #686868; display: flex; flex-direction: column; align-items: center; padding: 4px 0 0 1px; }
.cell svg { margin: auto 0; }
.fx { font: italic bold 15px "Liberation Serif", serif; fill: #d0d0d0; stroke: #444; stroke-width: .3; }
.fx.small { font-size: 12px; fill: #999; stroke: none; }
.panels { width: 241px; display: flex; flex-direction: column; }
.panel { display: flex; flex-direction: column; background: #535353; }
.ptabs { height: 17px; flex: none; display: flex; background: #3c3c3c; box-shadow: inset 0 -1px #656565; }
.ptabs span { padding-left: 8px; line-height: 18px; color: #8f8f8f; border-right: 1px solid #2b2b2b; }
.ptabs .act { background: #535353; color: #f0f0f0; }
.ptabs svg { margin: 4px 5px 0 auto; }
.w39 { width: 40px; }
.w62 { width: 63px; }

.character { height: 279px; }
.combo { position: relative; height: 20px; display: block; padding: 2px 22px 0 3px; background: #3a3a3a; border: 1px solid #333; border-bottom-color: #626262; line-height: 15px; }
.combo i { position: absolute; right: 0; top: 0; bottom: 0; width: 19px; background: linear-gradient(#6c6c6c, #5b5b5b); }
.combo i::after { content: ""; position: absolute; left: 6px; top: 7px; border: 3px solid transparent; border-top: 4px solid #ddd; border-bottom: 0; }
.combo.off { background: #4e4e4e; color: #777; border-color: #434343; }
.combo.off i { background: #5a5a5a; }
.combo.off i::after { border-top-color: #999; }
.fontrow { display: flex; gap: 10px; padding: 6px 0 6px 9px; }
.c109 { width: 109px; }
.c75 { width: 75px; padding-left: 7px; }
.grp { margin-right: 9px; border-top: 1px solid #3a3a3a; box-shadow: inset 0 1px #636363; flex: none; }
.two { height: 55px; display: grid; grid-template-columns: 20px 92px 7px 20px 81px; grid-auto-rows: 20px; row-gap: 5px; padding: 4px 0 0 2px; }
.two > :nth-child(4n+3) { grid-column: 4; }
.two > :nth-child(4n+1) { grid-column: 1; }
.two svg, .one svg, .scale svg { align-self: center; }
.one { height: 30px; display: flex; padding: 4px 0 0 3px; }
.one .combo { width: 82px; margin-left: 4px; }
.scale { height: 50px; display: grid; grid-template-columns: 21px 55px 65px 22px 55px; grid-auto-rows: 20px; row-gap: 1px; padding: 4px 0 0 3px; }
.scale > :nth-child(3) { grid-column: 4; }
.scale > :nth-child(5) { grid-column: 1; }
.color { grid-column: 3 / 5; justify-self: end; padding: 3px 7px 0 0; }
.scale .field { font-size: 11.500px; padding-left: 2px; }
.scale .red { background: #a31919; }
.g { font-family: "Liberation Serif", serif; fill: #bbb; stroke: #bbb; stroke-width: .3; }
.s10 { font-size: 10px; } .s12 { font-size: 12px; } .s13 { font-size: 13px; } .s14 { font-size: 14px; } .s15 { font-size: 15px; } .s17 { font-size: 18px; }
.tight { letter-spacing: -2px; }
.g.dark { fill: #333; stroke: #333; }
.g.grey { fill: #999; stroke: #999; }
.bold { font-weight: bold; }
.cj { font: 10px "Noto Sans CJK JP", sans-serif; fill: #ccc; }
.glyphs { height: 32px; display: grid; grid-template-columns: repeat(8, 24.100px); justify-content: start; align-items: center; text-align: center; padding-left: 19px; color: #bbb; font: 15px/18px "Liberation Serif", serif; -webkit-text-stroke: .4px; }
.glyphs small { font-size: 11px; }
.glyphs sup, .glyphs sub { font-size: 8px; line-height: 0; }
.dimmed { color: #858585; font-size: 17px; -webkit-text-stroke: .2px; }
.dimmed sup { font-size: 11px; }
.over { text-decoration: overline; }
.lang { display: flex; border-top: 1px solid #3a3a3a; margin-right: 9px; padding: 5px 0 0 7px; box-shadow: inset 0 1px #636363; }
.lang .select:first-child { width: 135px; }
.lang .select:last-child { width: 56px; }
.aa { width: 26px; padding: 2px 0 0 6px; font: 14px/14px "Liberation Serif", serif; color: #ccc; }
.aa small { font-size: 14px; position: relative; top: 3px; }

.pstyles { margin-top: 4px; height: 163px; }
.list { flex: 1; background: linear-gradient(90deg, #363636, #434343 5px) 225px 0 no-repeat; margin-top: 2px; }
.inner { width: 225px; height: 100%; background: #454545; }
.item { height: 23px; background: #596678; border-bottom: 1px solid #333; padding: 3px 0 0 8px; font-style: italic; }
.foot { height: 19px; flex: none; border-top: 1px solid #696969; background: #535353; display: flex; align-items: center; }
.f-styles { padding-left: 108px; gap: 16px; }
.f-styles .lite { margin-left: 3px; }
.f-styles .dk { margin-left: 1px; }
.resize { width: 9px; height: 9px; margin: 6px 2px 0 auto; background: radial-gradient(circle, #999 .7px, transparent 1px) 0 0 / 3px 3px; clip-path: polygon(100% 0, 100% 100%, 0 100%); }
.lite { color: #c4c4c4; } .mid { color: #aaa; } .dk { color: #858585; }

.layers { margin-top: 3px; height: 495px; }
.lrow { flex: none; display: flex; align-items: center; border-bottom: 1px solid #3a3a3a; box-shadow: 0 1px #656565; color: #c0c0c0; padding-left: 4px; }
.soft { background: linear-gradient(#626262, #575757); border-color: #424242; box-shadow: none; color: #bbb; }
.soft svg { color: #aaa; }
.filter { height: 29px; padding-bottom: 2px; gap: 12px; }
.filter .select { width: 71px; margin-right: 8px; justify-content: start; padding-left: 6px; gap: 6px; }
.filter .select svg:last-child { margin-left: auto; }
.filter > svg + svg { margin-left: -.3px; }
.switch { width: 10px; height: 17px; margin-left: 10px; border: 1px solid #333; background: linear-gradient(#777 0 8px, #444 8px); }
.blend { height: 27px; }
.blend .select { width: 111px; }
.t { letter-spacing: -.3px; }
.blend .t { width: 57px; padding-left: 8px; }
.blend .combo, .locks .combo { width: 56px; }
.blend .combo { margin-left: 8px; }
.locks { height: 30px; gap: 8px; box-shadow: none; padding-bottom: 1px; }
.lk { width: 31px; padding-left: 2px; margin-right: 1px; }
.lockg { color: #999; margin-left: 1px; }
.locks .t.fill { width: 27px; margin-left: 16px; }
.locks .combo { margin-left: 0; }
.layerlist { margin-top: 0; }
.layer { height: 27px; background: #596678; border-bottom: 1px solid #333; display: flex; align-items: center; color: #fff; }
.eye { width: 31px; height: 26px; background: #535353; border-right: 1px solid #333; display: flex; align-items: center; justify-content: center; }
.thumb { width: 32px; height: 19px; margin: 0 12px 0 3px; background: #fff; border: 1px solid #111; }
.lockw { margin-left: auto; margin-right: 16px; }
.f-layers { padding-left: 36px; gap: 14.500px; }

/* task bar */
.taskbar { height: 60px; flex: none; display: flex; align-items: center; background: linear-gradient(90deg, #0b0d0f 0, #0a1518 110px, #06222a 240px, #06242b 560px, #07191f 700px, #101418 800px, #12161a 870px, #071d22 1080px, #081a1e 1300px, #0a1012 1500px, #0a0e10); }
.win { margin-left: 24px; }
.cortana { margin-left: 48px; }
.search { width: 273px; height: 43px; margin: 0 0 1px 24px; display: flex; align-items: center; background: #ededed; color: #111; font-size: 15px; }
.search svg { margin: 0 3px 0 4px; }
.search span { margin-bottom: 1px; }
.search b { width: 70px; height: 43px; margin-left: auto; background: #2188ff; color: #fff; font-weight: 400; line-height: 41px; text-align: center; }
.tsep { width: 5px; height: 36px; margin: 0 23px 0 11px; border: 1px solid #3b4a4e; border-width: 0 1px; }
.app { width: 61px; height: 60px; margin-right: 14px; display: flex; align-items: center; justify-content: center; border-bottom: 3px solid transparent; border-top: 3px solid transparent; }
.app.run { border-bottom-color: #76b9ed; }
.app.current { width: 73px; margin-left: -6px; background: #55595b; border-top-color: #55595b; border-bottom-color: #84c1f1; }
.psicon { width: 34px; height: 32px; background: #1d0b5e; border: 2px solid #8ac4ff; color: #8ac4ff; font: bold 17px/27px "Open Sans", sans-serif; text-align: center; letter-spacing: -1px; box-shadow: 0 2px 3px #333; }
.tray { margin-left: auto; height: 60px; display: flex; align-items: center; }
.t2 { margin-left: 16px; } .t3 { margin-left: 16px; } .t4 { margin-left: 13px; }
.ime { width: 20px; margin-left: 12px; font: bold 19px/24px "Noto Sans CJK SC", sans-serif; color: #fff; }
.t5 { margin-left: 20px; }
.ball { width: 33px; height: 33px; margin: 0 0 0 25px; border-radius: 50%; border: 3px solid #05d86b; background: radial-gradient(circle at 50% 26px, #05d86b 20px, #063 21px); color: #fff; font-size: 17px; line-height: 26px; text-align: center; font-weight: 500; letter-spacing: -.5px; }
.clock { width: 96px; margin-left: 20px; display: flex; flex-direction: column; text-align: center; font-size: 18.500px; letter-spacing: -.1px; line-height: 28px; color: #fff; }
.note { margin-left: 27px; margin-top: 2px; }
.peek { width: 2px; height: 60px; margin: 0 6px 0 30px; background: #777; }

/* logo overlay */
.watermark { position: absolute; left: 1472px; top: 870px; opacity: .74; overflow: visible; }
.wm-bai { font: bold 78px "Liberation Sans", sans-serif; stroke: #fff; stroke-width: 2; }
.wm-jy { font: 900 58px "Noto Sans CJK SC", sans-serif; }
.wm-url { font: 500 38px "Noto Sans", sans-serif; }
.wm-du { font: bold 49px "Liberation Sans", sans-serif; fill: #000; }
```
